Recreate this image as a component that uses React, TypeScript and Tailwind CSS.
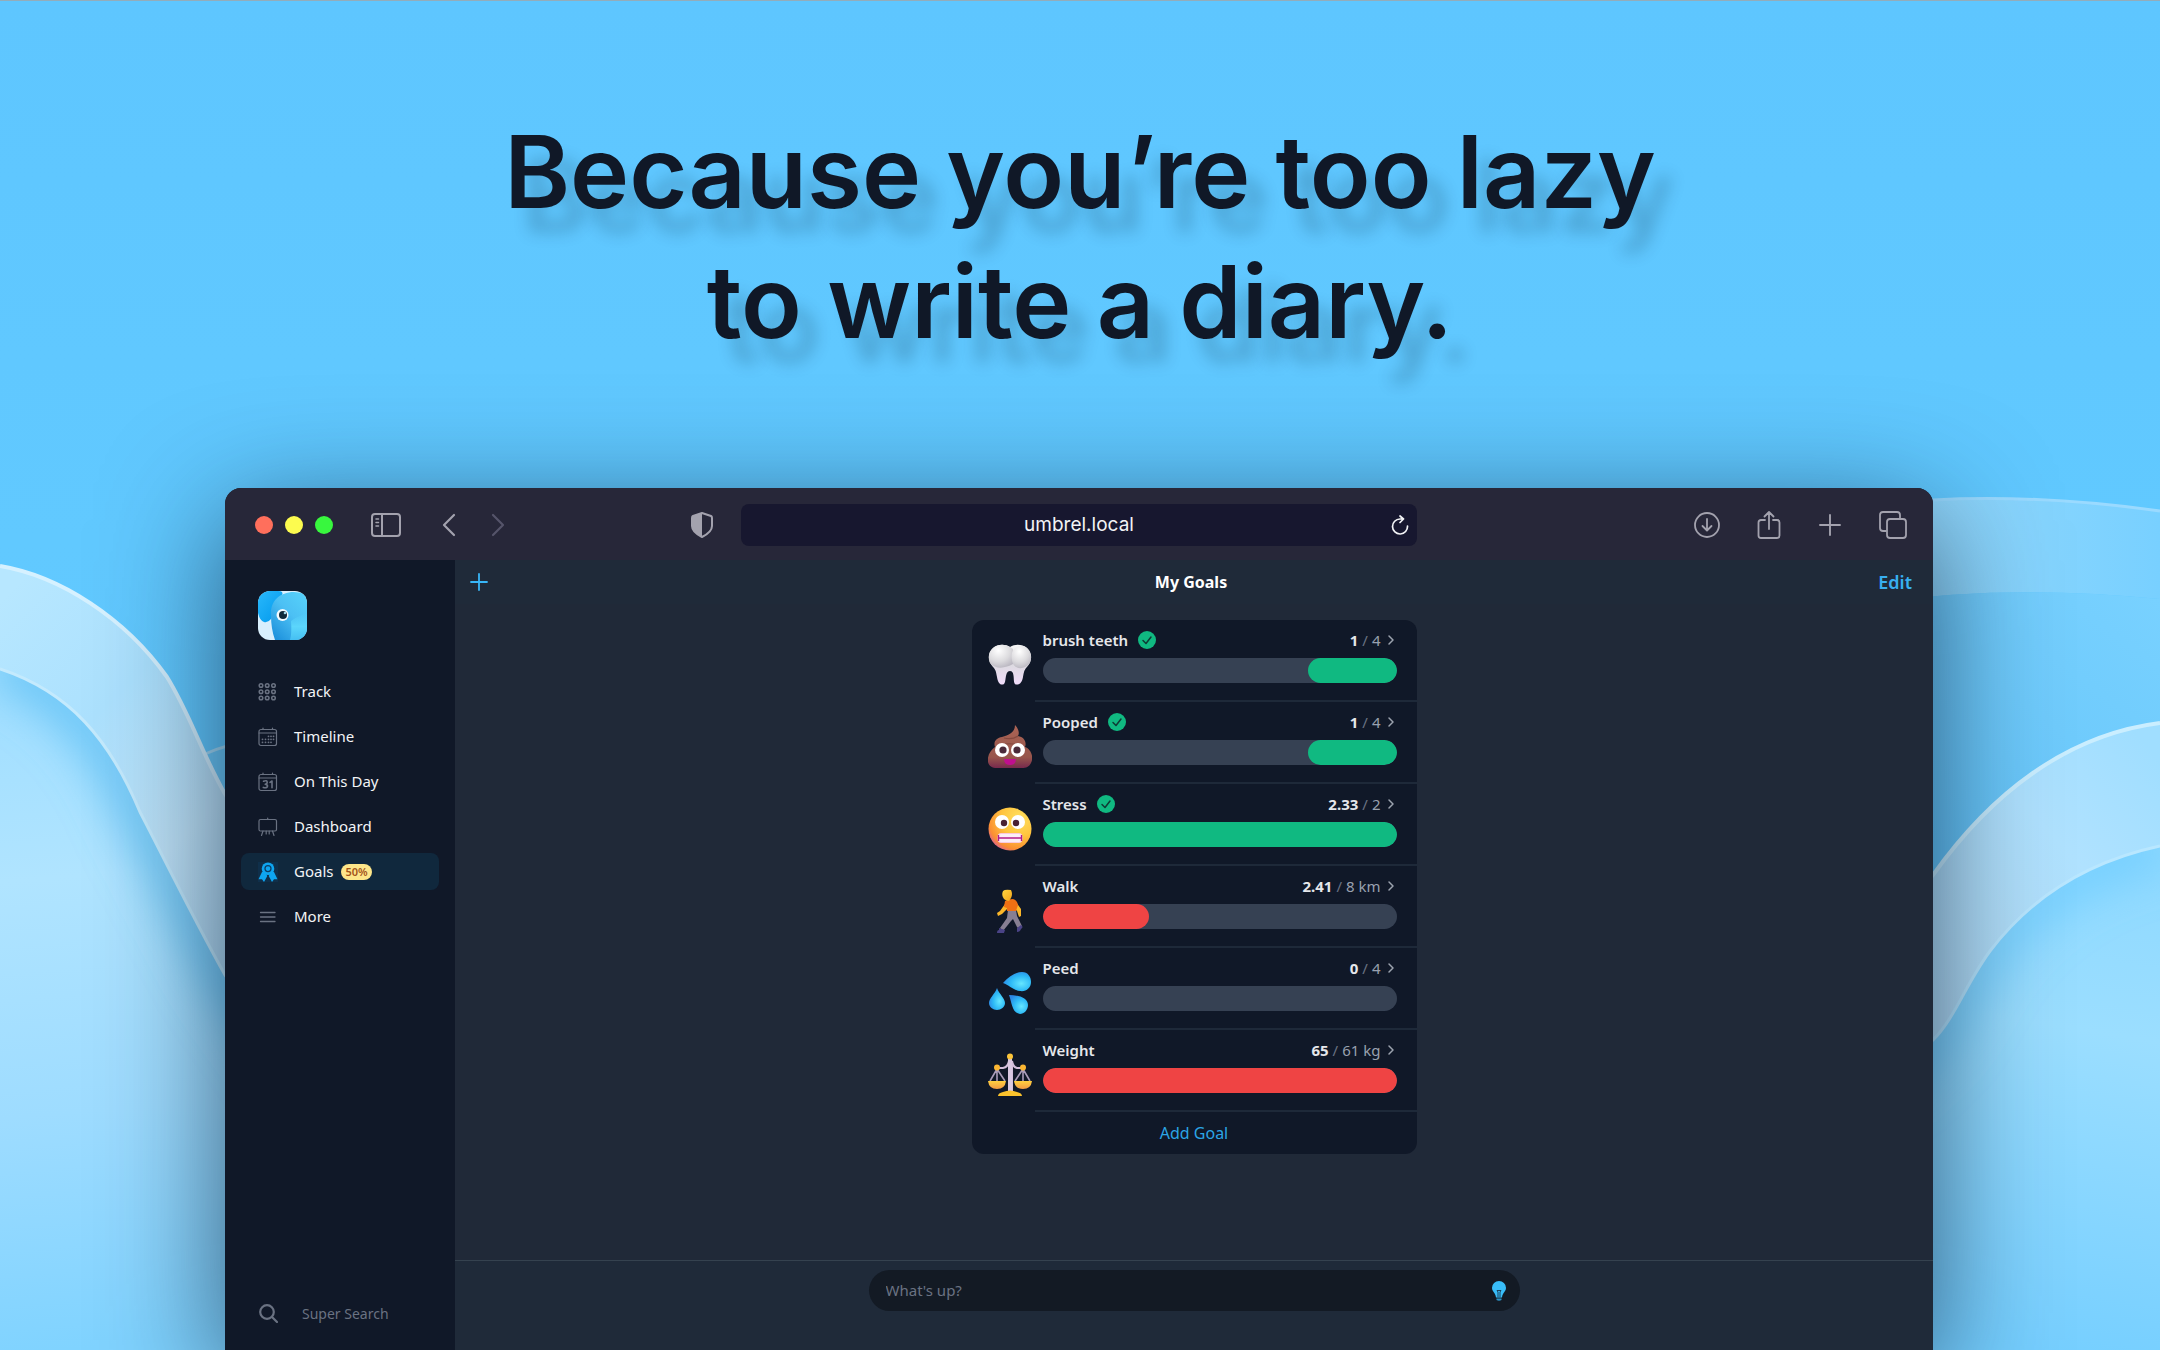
import type { ReactNode } from "react";

type IconProps = { className?: string };

function Backdrop() {
  return (
    <svg
      className="absolute inset-0 h-full w-full"
      viewBox="0 0 2160 1350"
      preserveAspectRatio="none"
      aria-hidden="true"
    >
      <defs>
        <linearGradient id="sky" x1="0" y1="0" x2="0" y2="1">
          <stop offset="0" stopColor="#5ec6ff" />
          <stop offset="0.4" stopColor="#61c9ff" />
          <stop offset="1" stopColor="#62c4fb" />
        </linearGradient>
        <linearGradient id="ribbonL" gradientUnits="userSpaceOnUse" x1="0" y1="600" x2="300" y2="900">
          <stop offset="0" stopColor="#b7e7ff" />
          <stop offset="0.35" stopColor="#ace1fe" />
          <stop offset="0.7" stopColor="#c0e3f8" />
          <stop offset="1" stopColor="#b4daf2" />
        </linearGradient>
        <linearGradient id="hillL" gradientUnits="userSpaceOnUse" x1="0" y1="680" x2="60" y2="1350">
          <stop offset="0" stopColor="#a0deff" />
          <stop offset="0.3" stopColor="#b0e4ff" />
          <stop offset="0.65" stopColor="#9edcff" />
          <stop offset="1" stopColor="#80d3ff" />
        </linearGradient>
        <linearGradient id="ribbonTop" gradientUnits="userSpaceOnUse" x1="1930" y1="0" x2="2160" y2="0">
          <stop offset="0" stopColor="#92d8fd" />
          <stop offset="1" stopColor="#78d0ff" />
        </linearGradient>
        <linearGradient id="ribbonR" gradientUnits="userSpaceOnUse" x1="1920" y1="980" x2="2160" y2="760">
          <stop offset="0" stopColor="#b4dcf5" />
          <stop offset="0.6" stopColor="#b0e2ff" />
          <stop offset="1" stopColor="#a0deff" />
        </linearGradient>
        <linearGradient id="hillBack" gradientUnits="userSpaceOnUse" x1="2160" y1="600" x2="1960" y2="860">
          <stop offset="0" stopColor="#78d1ff" />
          <stop offset="1" stopColor="#66c5f9" />
        </linearGradient>
        <linearGradient id="hillR" gradientUnits="userSpaceOnUse" x1="2120" y1="860" x2="2040" y2="1350">
          <stop offset="0" stopColor="#8fd9ff" />
          <stop offset="0.35" stopColor="#9bdeff" />
          <stop offset="1" stopColor="#76cfff" />
        </linearGradient>
        <filter id="soft" x="-40%" y="-20%" width="180%" height="140%">
          <feGaussianBlur stdDeviation="22" />
        </filter>
        <clipPath id="clipL">
          <path d="M0 669C70 692 110 740 140 812C165 860 190 912 225 975L300 1080V1350H0Z" />
        </clipPath>
        <clipPath id="clipR">
          <path d="M1880 1090L1933 1040C1955 1018 1965 985 1990 951C2035 892 2095 860 2160 846V1350H1880Z" />
        </clipPath>
      </defs>
      <rect width="2160" height="1350" fill="url(#sky)" />
      <rect width="2160" height="1" fill="#93acba" />

      <path d="M180 764Q210 748 260 738V900H200Z" fill="#6cc8f8" />
      <path d="M205 754Q225 745 260 738" fill="none" stroke="#a5daf5" strokeWidth="3" />

      <path
        d="M0 566C60 576 125 618 167 677C190 714 202 754 225 794L300 900V1080L225 975C190 912 165 860 140 812C110 740 70 692 0 669Z"
        fill="url(#ribbonL)"
      />
      <path d="M0 566C60 576 125 618 167 677C190 714 202 754 225 794L300 900" fill="none" stroke="#d6f1ff" strokeWidth="4" />
      <path d="M0 669C70 692 110 740 140 812C165 860 190 912 225 975L300 1080V1350H0Z" fill="url(#hillL)" />
      <g clipPath="url(#clipL)">
        <path
          d="M0 660C70 692 110 740 140 812C165 860 190 912 225 975L300 1080"
          fill="none"
          stroke="#5dbff5"
          strokeOpacity="0.85"
          strokeWidth="44"
          filter="url(#soft)"
        />
      </g>
      <path d="M0 669C70 692 110 740 140 812C165 860 190 912 225 975L300 1080" fill="none" stroke="#c4eafd" strokeWidth="3" />

      <path d="M1880 504Q2010 490 2160 511V599Q2010 584 1880 602Z" fill="url(#ribbonTop)" />
      <path d="M1880 504Q2010 490 2160 511" fill="none" stroke="#9adaff" strokeWidth="3" />
      <path d="M1880 602Q2010 584 2160 599V900H1880Z" fill="url(#hillBack)" />

      <path
        d="M1880 935L1933 875C1990 795 2065 735 2160 723V846C2095 860 2035 892 1990 951C1965 985 1950 1022 1933 1040L1880 1090Z"
        fill="url(#ribbonR)"
      />
      <path d="M1880 935L1933 875C1990 795 2065 735 2160 723" fill="none" stroke="#caeeff" strokeWidth="4" />
      <path d="M1880 1090L1933 1040C1955 1018 1965 985 1990 951C2035 892 2095 860 2160 846V1350H1880Z" fill="url(#hillR)" />
      <g clipPath="url(#clipR)">
        <path
          d="M1880 1090L1933 1040C1955 1018 1965 985 1990 951C2035 892 2095 860 2160 846"
          fill="none"
          stroke="#6acbff"
          strokeOpacity="0.75"
          strokeWidth="40"
          filter="url(#soft)"
        />
      </g>
      <path d="M1880 1090L1933 1040C1955 1018 1965 985 1990 951C2035 892 2095 860 2160 846" fill="none" stroke="#b9e7ff" strokeWidth="3" />
    </svg>
  );
}

function Line({ className, box, width, children }: { className: string; box: string; width: number; children: ReactNode }) {
  return (
    <svg
      className={className}
      viewBox={box}
      fill="none"
      stroke="currentColor"
      strokeWidth={width}
      strokeLinecap="round"
      strokeLinejoin="round"
      aria-hidden="true"
    >
      {children}
    </svg>
  );
}

function ElephantLogo() {
  return (
    <svg className="size-[49px] rounded-xl" viewBox="0 0 49 49" role="img" aria-label="Elephant logo">
      <defs>
        <linearGradient id="head" x1="1" y1="0" x2="0.2" y2="1">
          <stop offset="0" stopColor="#57d3fb" />
          <stop offset="0.5" stopColor="#4cc0f4" />
          <stop offset="1" stopColor="#1f93dd" />
        </linearGradient>
        <linearGradient id="ear" x1="0" y1="0" x2="1" y2="1">
          <stop offset="0" stopColor="#29b8fb" />
          <stop offset="1" stopColor="#0098ec" />
        </linearGradient>
        <linearGradient id="trunk" x1="0" y1="0" x2="0" y2="1">
          <stop offset="0" stopColor="#5cd6fc" stopOpacity="0" />
          <stop offset="0.5" stopColor="#5cd6fc" />
          <stop offset="1" stopColor="#45bff2" />
        </linearGradient>
      </defs>
      <rect width="49" height="49" fill="#d9effd" />
      <path d="M0 0H20Q26 0 24 4L13 28Q10 32 6 31Q2 30 0 22Z" fill="url(#ear)" />
      <path d="M13 24C12 10 22 1 36 1Q43 1 49 4V49H17Q13 38 13 24Z" fill="url(#head)" />
      <path d="M32 49Q34 42 33 30Q38 26 49 22V49Z" fill="url(#trunk)" />
      <circle cx="24.500" cy="24" r="6" fill="#f4fbff" />
      <circle cx="25" cy="24" r="4" fill="#0f2a3a" />
      <circle cx="27" cy="22" r="1.300" fill="#9ed5e8" />
    </svg>
  );
}

function GridIcon({ className = "" }: IconProps) {
  return (
    <Line className={className} box="0 0 20 20" width={1.5}>
      {[3.5, 9.7, 16].map((y) => [3, 9.2, 15.5].map((x) => <circle key={`${x}-${y}`} cx={x} cy={y} r="1.800" />))}
    </Line>
  );
}

function TimelineIcon({ className = "" }: IconProps) {
  return (
    <Line className={className} box="0 0 20 20" width={1.2}>
      <rect x="1" y="2.500" width="17.500" height="16" rx="2" />
      <path d="M1 6H18.500M5 1V2.500M14.500 1V2.500" />
      <path d="M10.500 9.300h.01M13 9.300h.01M15.500 9.300h.01M4.500 12.300h.01M7.500 12.300h.01M10.500 12.300h.01M13 12.300h.01M15.500 12.300h.01M4.500 15.300h.01M7.500 15.300h.01M10.500 15.300h.01M13 15.300h.01" strokeWidth="1.800" />
    </Line>
  );
}

function DayIcon({ className = "" }: IconProps) {
  return (
    <Line className={className} box="0 0 20 20" width={1.2}>
      <rect x="1" y="2.500" width="17.500" height="16" rx="2" />
      <path d="M1 6H18.500M5 1V2.500M14.500 1V2.500" />
      <path d="M5.500 9.200Q9.200 7.800 9.200 10.300Q9.200 12 7.200 12.200Q9.700 12.500 9.500 14.300Q9 16.400 5.300 15.400M12 10.300L14 9V15.800" strokeWidth="1.600" />
    </Line>
  );
}

function BoardIcon({ className = "" }: IconProps) {
  return (
    <Line className={className} box="0 0 20 20" width={1.2}>
      <rect x="1" y="2.500" width="17.500" height="11.500" rx="1.500" />
      <path d="M9.700 1V2.500M5 14L3.500 18.500M14.500 14L16 18.500M8.200 14V17M11.200 14V17" />
    </Line>
  );
}

function AwardIcon({ className = "" }: IconProps) {
  return (
    <svg className={className} viewBox="0 0 20 20" aria-hidden="true">
      <rect width="20" height="20" fill="#0f2f4a" />
      <path d="M4 10L0.500 17.200H4L6 20L9.300 14L7 10ZM16 10L19.500 17.200H16L14 20L10.700 14L13 10Z" fill="#0ea5f0" />
      <circle cx="10" cy="6.800" r="6.300" fill="#0ea5f0" />
      <circle cx="10" cy="6.600" r="3" fill="none" stroke="#0c3f66" strokeWidth="1.300" />
    </svg>
  );
}

function MenuIcon({ className = "" }: IconProps) {
  return (
    <Line className={className} box="0 0 20 20" width={1.3}>
      <path d="M2.500 5.500H17M2.500 10H17M2.500 14.500H17" />
    </Line>
  );
}

function Tooth() {
  return (
    <svg className="size-11" viewBox="0 0 44 44" aria-hidden="true">
      <defs>
        <linearGradient id="tooth" x1="0" y1="0" x2="0" y2="1">
          <stop offset="0" stopColor="#f7f7f7" />
          <stop offset="0.5" stopColor="#dcdae0" />
          <stop offset="1" stopColor="#f0dcfa" />
        </linearGradient>
        <radialGradient id="crown" cx="0.4" cy="0.25" r="0.8">
          <stop offset="0" stopColor="#ffffff" />
          <stop offset="0.6" stopColor="#dcdbde" />
          <stop offset="1" stopColor="#b9b6c0" />
        </radialGradient>
        <linearGradient id="root" x1="0" y1="0" x2="0" y2="1">
          <stop offset="0" stopColor="#cdc6d6" />
          <stop offset="0.4" stopColor="#e6d6f3" />
          <stop offset="1" stopColor="#f6edfb" />
        </linearGradient>
      </defs>
      <path
        d="M22 4C17 1 10 1 5 5C-1 10 0 19 5 24C8 27 8 29 9 34C10 40 12 42 15 41.500C19 41 16 28 22 28C28 28 24 41 28 41.500C32 42 34 39 35 34C36 29 36 27 39 24C44 19 45 10 39 5C34 1 27 1 22 4Z"
        fill="url(#tooth)"
      />
      <path d="M5 22Q12 28 22 24Q32 28 39 22V24C36 27 36 29 35 34C34 39 32 42 28 41.500C24 41 28 28 22 28C16 28 19 41 15 41.500C12 42 10 40 9 34C8 29 8 27 5 24Z" fill="url(#root)" />
      <path d="M22 4C17 1 10 1 5 5C0 9 0 16 2 20C8 27 18 25 25 21V6Z" fill="url(#crown)" />
      <path d="M26 6C31 2 35 2 39 5C44 10 44 17 41 21C37 26 29 27 25 21C23 16 23 9 26 6Z" fill="url(#crown)" />
    </svg>
  );
}

function Poo() {
  return (
    <svg className="size-11" viewBox="0 0 44 44" aria-hidden="true">
      <defs>
        <linearGradient id="poo" x1="0" y1="0" x2="0" y2="1">
          <stop offset="0" stopColor="#ab6455" />
          <stop offset="0.75" stopColor="#98564c" />
          <stop offset="1" stopColor="#77294d" />
        </linearGradient>
      </defs>
      <path
        d="M27 0C30 3 32 8 30 11C36 12 39 17 37 22C43 24 46 32 43 38C41 42 38 43 34 43H9C4 43 1 41 0 37C-1 30 3 25 7 22C5 16 9 13 14 12C20 10 27 8 27 0Z"
        fill="url(#poo)"
      />
      <path d="M8 22Q18 16 36 21M16 13Q24 15 30 11" fill="none" stroke="#774038" strokeWidth="1.200" opacity="0.7" />
      <circle cx="14" cy="25" r="7" fill="#fff" />
      <circle cx="30" cy="25" r="7" fill="#fff" />
      <circle cx="15" cy="25" r="3.600" fill="#4a2a3a" />
      <circle cx="29" cy="25" r="3.600" fill="#4a2a3a" />
      <path d="M16 34H28Q28 40 22 40Q16 40 16 34Z" fill="#bf0f8f" />
    </svg>
  );
}

function Grimace() {
  return (
    <svg className="size-11" viewBox="0 0 44 44" aria-hidden="true">
      <defs>
        <radialGradient id="face" cx="0.72" cy="0.25" r="0.85">
          <stop offset="0" stopColor="#ffe05e" />
          <stop offset="0.5" stopColor="#ffc43e" />
          <stop offset="0.85" stopColor="#fb8f33" />
          <stop offset="1" stopColor="#e0638c" />
        </radialGradient>
      </defs>
      <circle cx="22" cy="22" r="21.500" fill="url(#face)" />
      <circle cx="14" cy="15" r="7" fill="#fff" />
      <circle cx="30" cy="15" r="7" fill="#fff" />
      <circle cx="16" cy="16" r="3.200" fill="#4a2233" />
      <circle cx="28" cy="16" r="3.200" fill="#4a2233" />
      <rect x="10" y="26.500" width="24" height="9" rx="3" fill="#fbeef8" stroke="#f9c9dc" />
      <path d="M10 31H34M10.500 28V34M33.500 28V34" stroke="#b51c89" strokeWidth="1.400" />
    </svg>
  );
}

function Walker() {
  return (
    <svg className="size-11" viewBox="0 0 44 44" aria-hidden="true">
      <defs>
        <linearGradient id="hair" x1="0" y1="0" x2="1" y2="1">
          <stop offset="0" stopColor="#ffd640" />
          <stop offset="1" stopColor="#f4a51b" />
        </linearGradient>
      </defs>
      <path d="M20 21L19 29L12 39L15 42L23 32L25 30L29 38L31 40L34 37L29 27L28 21Z" fill="#877f92" />
      <path d="M11 39L17 41L16 44H9Q9 41 11 41ZM29 39L33 36Q36 38 33 40Q32 43 29 43Z" fill="#4a4386" />
      <path d="M17 15L12 22L9 24L10 27L14 25L20 19ZM28 13L33 20L33 27L31 28L29 22L25 18Z" fill="#fbb629" />
      <path d="M17 12Q20 10 25 10Q29 11 30 16L28 22H19L19 19L16 18Z" fill="#ef7013" />
      <path d="M15 2Q17 0 23 1Q25 5 23 9L21 12Q18 12 16 10Q13 6 15 2Z" fill="url(#hair)" />
    </svg>
  );
}

function Drops() {
  return (
    <svg className="size-11" viewBox="0 0 44 44" aria-hidden="true">
      <defs>
        <radialGradient id="drop" cx="0.65" cy="0.6" r="0.7">
          <stop offset="0" stopColor="#66e6ff" />
          <stop offset="0.55" stopColor="#2db9f6" />
          <stop offset="1" stopColor="#2c86e4" />
        </radialGradient>
      </defs>
      <path d="M15 12C21 5 28 1 34 1C40 1 43 6 43 11C43 17 38 21 32 20C25 19 21 14 15 12Z" fill="url(#drop)" />
      <path d="M9 17C11 23 17 27 17 32C17 36 13 39 9 39C5 39 1 36 1 32C1 27 7 23 9 17Z" fill="url(#drop)" />
      <path d="M21 24C29 24 40 26 40 34C40 39 36 43 32 43C24 42 24 32 21 24Z" fill="url(#drop)" />
    </svg>
  );
}

function Scales() {
  return (
    <svg className="size-11" viewBox="0 0 44 44" aria-hidden="true">
      <defs>
        <linearGradient id="gold" x1="0" y1="0" x2="0" y2="1">
          <stop offset="0" stopColor="#ffcf3f" />
          <stop offset="1" stopColor="#f29a44" />
        </linearGradient>
      </defs>
      <path d="M9 16L2 28M9 16V28M9 16L17 28M35 16L27 28M35 16V28M35 16L42 28" stroke="#a99bb8" strokeWidth="1.600" />
      <path d="M9 15H15Q20 14 21 8V38H24V8Q25 14 29 15H35" fill="none" stroke="#d3bfdc" strokeWidth="2" />
      <path d="M22 6V38" stroke="#d9c8e2" strokeWidth="4" />
      <circle cx="22" cy="3.500" r="3" fill="#fcc43a" />
      <circle cx="9" cy="14.500" r="3" fill="#fcb632" />
      <circle cx="35" cy="14.500" r="3" fill="#fcb632" />
      <path d="M0 28H18Q17 36 9 36Q1 36 0 28ZM26 28H44Q43 36 35 36Q27 36 26 28Z" fill="url(#gold)" />
      <path d="M10 43Q10 40 15 39Q22 36 29 39Q34 40 34 43Z" fill="#fbc22c" />
    </svg>
  );
}

const navItems = [
  { label: "Track", icon: GridIcon },
  { label: "Timeline", icon: TimelineIcon },
  { label: "On This Day", icon: DayIcon },
  { label: "Dashboard", icon: BoardIcon },
  { label: "Goals", icon: AwardIcon, badge: "50%" },
  { label: "More", icon: MenuIcon },
];

type Goal = {
  name: string;
  icon: ReactNode;
  value: string;
  target: string;
  percent: number;
  met: boolean;
  fromRight?: boolean;
};

const goals: Goal[] = [
  { name: "brush teeth", icon: <Tooth />, value: "1", target: "4", percent: 25, met: true, fromRight: true },
  { name: "Pooped", icon: <Poo />, value: "1", target: "4", percent: 25, met: true, fromRight: true },
  { name: "Stress", icon: <Grimace />, value: "2.33", target: "2", percent: 100, met: true },
  { name: "Walk", icon: <Walker />, value: "2.41", target: "8 km", percent: 30, met: false },
  { name: "Peed", icon: <Drops />, value: "0", target: "4", percent: 0, met: false },
  { name: "Weight", icon: <Scales />, value: "65", target: "61 kg", percent: 100, met: false },
];

function GoalRow({ goal }: { goal: Goal }) {
  return (
    <li className="flex h-[82px] pl-4">
      <div className="flex w-[47px] shrink-0 items-center pt-2">{goal.icon}</div>
      <div className="flex flex-1 flex-col border-b-2 border-gray-800 pr-5 pl-2 pt-1.5">
        <div className="flex h-7 items-center">
          <span className="font-semibold text-gray-200">{goal.name}</span>
          {goal.met && (
            <svg className="ml-2.5 size-[18px]" viewBox="0 0 18 18" role="img" aria-label="Goal met">
              <circle cx="9" cy="9" r="9" fill="#10b981" />
              <path d="M5 9.500L8 12.500L13 6" fill="none" stroke="#0f3b35" strokeWidth="1.500" strokeLinecap="round" strokeLinejoin="round" />
            </svg>
          )}
          <button type="button" className="ml-auto flex items-center gap-1" aria-label={`${goal.name} details`}>
            <b className="font-bold text-gray-200">{goal.value}</b>
            <span className="text-gray-500">/</span>
            <span className="text-gray-400">{goal.target}</span>
            <Line className="size-3" box="0 0 12 12" width={1.5}>
              <path d="M4 2L8 6L4 10" stroke="#9ca3af" />
            </Line>
          </button>
        </div>
        <div
          className="mt-1 flex h-[25px] overflow-hidden rounded-full bg-gray-700"
          role="progressbar"
          aria-label={goal.name}
          aria-valuenow={goal.percent}
        >
          <div
            className={`h-full rounded-full ${goal.met ? "bg-[#10b981]" : "bg-[#ef4444]"} ${goal.fromRight ? "ml-auto" : ""}`}
            style={{ width: `${goal.percent}%` }}
          />
        </div>
      </div>
    </li>
  );
}

function BrowserBar() {
  return (
    <div className="grid h-[72px] shrink-0 grid-cols-[1fr_676px_1fr] items-center bg-[#272739] pt-0.5 text-[#a3a2ae]">
      <div className="flex items-center pl-[30px] pr-7">
        <div className="flex gap-3">
          <button type="button" aria-label="Close" className="size-[18px] rounded-full bg-[#ff6f5c]" />
          <button type="button" aria-label="Minimize" className="size-[18px] rounded-full bg-[#fcfb4f]" />
          <button type="button" aria-label="Zoom" className="size-[18px] rounded-full bg-[#38f73e]" />
        </div>
        <button type="button" aria-label="Sidebar" className="ml-[38px]">
          <Line className="h-6 w-[30px]" box="0 0 30 24" width={2}>
            <rect x="1" y="1" width="28" height="22" rx="3" />
            <path d="M11 1V23" />
            <path d="M5 6H7.500M5 9.500H7.500M5 13H7.500" strokeWidth="1.500" />
          </Line>
        </button>
        <button type="button" aria-label="Back" className="ml-[41px]">
          <Line className="h-6 w-3.5" box="0 0 14 24" width={2.2}>
            <path d="M12 2L2 12L12 22" />
          </Line>
        </button>
        <button type="button" aria-label="Forward" className="ml-[35px] text-[#55546a]">
          <Line className="h-6 w-3.5" box="0 0 14 24" width={2.2}>
            <path d="M2 2L12 12L2 22" />
          </Line>
        </button>
        <button type="button" aria-label="Privacy report" className="ml-auto">
          <svg className="h-[26px] w-[22px]" viewBox="0 0 22 26" aria-hidden="true">
            <path d="M11 1L20 4Q21 4.500 21 6V14Q21 20 11 25Q1 20 1 14V6Q1 4.500 2 4Z" fill="none" stroke="currentColor" strokeWidth="2" strokeLinejoin="round" />
            <path d="M11 1V25Q1 20 1 14V6Q1 4.500 2 4Z" fill="currentColor" />
          </svg>
        </button>
      </div>
      <div className="flex h-[42px] items-center rounded-lg bg-[#17172f] px-2 text-gray-100">
        <span className="w-[18px]" />
        <input
          aria-label="Address"
          defaultValue="umbrel.local"
          className="min-w-0 flex-1 bg-transparent text-center font-[Inter,sans-serif] text-[19px] outline-none"
        />
        <button type="button" aria-label="Reload">
          <Line className="h-5 w-[18px]" box="0 0 18 20" width={1.7}>
            <path d="M16.500 11A7.500 7.500 0 1 1 9 4H12M9 1L12.500 4L9 7.500" />
          </Line>
        </button>
      </div>
      <div className="flex items-center justify-end gap-[37px] pr-[26px]">
        <button type="button" aria-label="Downloads">
          <Line className="size-[26px]" box="0 0 26 26" width={1.8}>
            <circle cx="13" cy="13" r="12" />
            <path d="M13 7V18M8.500 14L13 18.500L17.500 14" />
          </Line>
        </button>
        <button type="button" aria-label="Share">
          <Line className="h-7 w-6" box="0 0 24 28" width={1.8}>
            <path d="M8 9H4Q1.500 9 1.500 11.500V24.500Q1.500 27 4 27H20Q22.500 27 22.500 24.500V11.500Q22.500 9 20 9H16M12 18V1.500M7.500 5.500L12 1L16.500 5.500" />
          </Line>
        </button>
        <button type="button" aria-label="New tab">
          <Line className="h-[26px] w-6" box="0 0 24 26" width={1.9}>
            <path d="M12 3V23M2 13H22" />
          </Line>
        </button>
        <button type="button" aria-label="Tab overview">
          <Line className="size-7" box="0 0 28 28" width={1.8}>
            <rect x="8" y="8" width="19" height="19" rx="3" />
            <path d="M7 20H4Q1 20 1 17V4Q1 1 4 1H18Q21 1 21 4V7" />
          </Line>
        </button>
      </div>
    </div>
  );
}

function Sidebar() {
  return (
    <aside className="flex w-[230px] shrink-0 flex-col bg-gray-900 px-4 pt-[31px]">
      <a href="#home" className="ml-[17px] block w-fit" aria-label="Home">
        <ElephantLogo />
      </a>
      <nav className="mt-[33px] flex flex-col gap-2">
        {navItems.map(({ label, icon: Icon, badge }) => (
          <a
            key={label}
            href={`#${label}`}
            className={`flex h-[37px] items-center rounded-lg pl-[17px] text-gray-100 ${badge ? "bg-[#10283d]" : ""}`}
          >
            <Icon className="mr-4 size-5 text-gray-500" />
            {label}
            {badge && (
              <span className="ml-2 rounded-full bg-[#fde68a] px-1 text-[11px] leading-4 font-semibold text-[#a3541a]">{badge}</span>
            )}
          </a>
        ))}
      </nav>
      <label className="mt-auto mb-[21px] flex h-8 items-center pl-[18px] text-gray-500">
        <Line className="mr-6 size-[19px]" box="0 0 19 19" width={2.2}>
          <circle cx="8" cy="8" r="6.800" />
          <path d="M13 13L18 18" />
        </Line>
        <input
          aria-label="Super Search"
          placeholder="Super Search"
          className="w-28 bg-transparent text-[14px] outline-none placeholder:text-gray-500"
        />
      </label>
    </aside>
  );
}

export default function App() {
  return (
    <div className="relative flex min-h-screen flex-col overflow-hidden bg-[#5ec6ff] font-['Noto_Sans','Open_Sans',sans-serif] text-[15px]">
      <Backdrop />
      <h1 className="relative pt-[107px] text-center font-[Inter,sans-serif] text-[100px] leading-[130px] font-semibold text-[#101827] [text-shadow:18px_24px_16px_rgba(10,40,60,0.22)]">
        Because you’re too lazy
        <br />
        to write a diary.
      </h1>
      <div className="relative mt-[121px] mr-[227px] ml-[225px] flex flex-1 flex-col overflow-hidden rounded-t-2xl bg-gray-800 shadow-[0_30px_120px_rgba(12,35,60,0.7)]">
        <BrowserBar />
        <div className="flex flex-1">
          <Sidebar />
          <main className="flex min-w-0 flex-1 flex-col bg-[#202938]">
            <header className="grid h-11 grid-cols-3 items-center bg-[#1f2a39] pr-[21px] pl-[15px]">
              <button type="button" aria-label="New goal" className="w-fit text-[#38b6f8]">
                <Line className="size-[18px]" box="0 0 18 18" width={1.8}>
                  <path d="M9 1V17M1 9H17" />
                </Line>
              </button>
              <h2 className="text-center text-[16px] font-bold text-white">My Goals</h2>
              <button type="button" className="ml-auto text-[18px] font-semibold text-[#38aff0]">
                Edit
              </button>
            </header>
            <section className="mx-auto mt-4 w-[445px] max-w-full rounded-xl bg-gray-900">
              <ul>
                {goals.map((goal) => (
                  <GoalRow key={goal.name} goal={goal} />
                ))}
              </ul>
              <button type="button" className="h-[42px] w-full text-[16px] text-[#2ba5e6]">
                Add Goal
              </button>
            </section>
            <footer className="mt-auto flex h-[90px] items-start justify-center border-t border-[#35424f] bg-[#1f2a39] pt-[9px]">
              <div className="flex h-[41px] w-[651px] items-center rounded-full bg-[#131a24] pr-3.5 pl-[17px]">
                <input
                  aria-label="What's up?"
                  placeholder="What's up?"
                  className="min-w-0 flex-1 bg-transparent outline-none placeholder:text-gray-500"
                />
                <button type="button" aria-label="Ideas">
                  <svg className="h-5 w-3.5" viewBox="0 0 14 20" aria-hidden="true">
                    <path d="M7 0A7 6.800 0 0 1 14 6.800C14 11 10.500 11.500 10 16.500H4C3.500 11.500 0 11 0 6.800A7 6.800 0 0 1 7 0Z" fill="#38bdf8" />
                    <path d="M5 9.500L6 11V16M9 9.500L8 11V16M5 9.500H9" fill="none" stroke="#16344a" strokeWidth="0.900" />
                    <path d="M4.500 17.500H9.500V19Q7 20.500 4.500 19Z" fill="#2b93c6" />
                  </svg>
                </button>
              </div>
            </footer>
          </main>
        </div>
      </div>
    </div>
  );
}
